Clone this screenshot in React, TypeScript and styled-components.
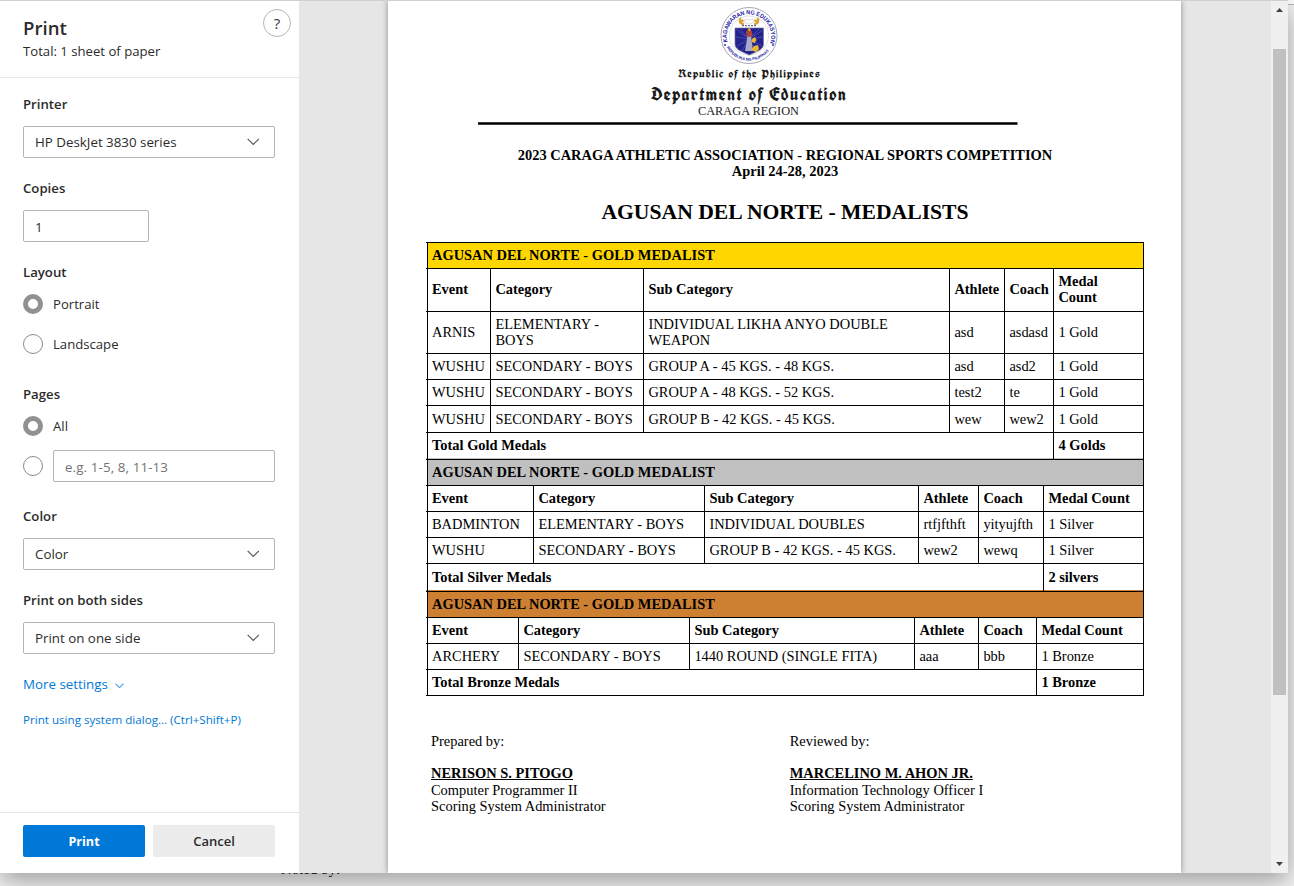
import React from "react";
import styled, { createGlobalStyle } from "styled-components";

const Global = createGlobalStyle`
  * { box-sizing: border-box; }
  body { margin: 0; background: #fff; overflow: hidden; }
`;

const UI = `"Open Sans", "Noto Sans", sans-serif`;
const SERIF = `"Liberation Serif", "Times New Roman", serif`;

const Backdrop = styled.div`
  position: relative;
  width: 1294px;
  height: 886px;
  overflow: hidden;
  background: linear-gradient(#fff 4px, #b8b8b8 4px, #b8b8b8 5px, #f4f4f4 5px);
`;

const Behind = styled.div`
  position: absolute;
  left: 281px;
  top: 861px;
  font: 14.5px/17px ${SERIF};
  letter-spacing: 0.2px;
  color: #000;
`;

const Dialog = styled.div`
  position: relative;
  display: flex;
  width: 1288px;
  height: 873px;
  border-top: 1px solid #d0d0d0;
  background: #fff;
  box-shadow: 0 8px 24px rgba(0, 0, 0, 0.36);
`;

const Sidebar = styled.aside`
  display: flex;
  flex-direction: column;
  width: 299px;
  font-family: ${UI};
  font-size: 13.33px;
  color: #2b2b2b;
`;

const Header = styled.header`
  display: flex;
  justify-content: space-between;
  height: 77px;
  padding: 8px 8px 0 23px;
  border-bottom: 1px solid #e6e6e6;
`;

const Title = styled.h1`
  margin: 6px 0 1px;
  font-size: 18.6px;
  line-height: 25px;
  font-weight: 600;
`;

const Total = styled.div`
  font-size: 13.15px;
  line-height: 20px;
`;

const Help = styled.button`
  width: 28px;
  height: 28px;
  padding: 0;
  border: 1px solid #b5b5b5;
  border-radius: 50%;
  background: #fff;
  color: #333;
  font: 15px/24px ${UI};
`;

const Settings = styled.div`
  flex: 1;
  padding: 16px 24px 0 23px;
`;

const Label = styled.div`
  height: 20px;
  margin-bottom: 12px;
  line-height: 20px;
  font-weight: 600;
  font-size: 13.2px;
`;

const Field = styled.div`
  margin-bottom: 20px;
`;

const Box = styled.div<{ $w: number; $entry?: boolean; $hint?: boolean }>`
  display: flex;
  align-items: center;
  justify-content: space-between;
  width: ${(p) => p.$w}px;
  height: 32px;
  padding: ${(p) => (p.$entry ? 2 : 0)}px 15px 0 11px;
  border: 1px solid #b4b4b4;
  border-radius: 2px;
  font-size: 13.33px;
  color: ${(p) => (p.$hint ? "#737373" : "#2b2b2b")};
  letter-spacing: ${(p) => (p.$hint ? 0.12 : 0)}px;
`;

const RadioRow = styled.div`
  display: flex;
  align-items: center;
  gap: 10px;
  height: 32px;
  margin-bottom: 8px;
  font-size: 13.15px;
`;

const Radio = styled.span<{ $on?: boolean }>`
  width: 20px;
  height: 20px;
  border: ${(p) => (p.$on ? "5px solid #919191" : "1px solid #8a8a8a")};
  border-radius: 50%;
`;

const RadioGroup = styled.div`
  height: 72px;
  margin: -6px 0 24px;
`;

const Link = styled.a<{ $small?: boolean }>`
  display: flex;
  align-items: center;
  gap: 7px;
  height: 20px;
  margin-bottom: 15px;
  font-size: ${(p) => (p.$small ? 11.62 : 13.33)}px;
  color: #0078d4;
  white-space: nowrap;
  svg { margin-top: 3px; }
`;

const Actions = styled.footer`
  display: flex;
  gap: 8px;
  height: 61px;
  padding: 12px 24px 0 23px;
  border-top: 1px solid #e6e6e6;
`;

const Button = styled.button<{ $primary?: boolean }>`
  flex: 1;
  height: 32px;
  border: 0;
  border-radius: 2px;
  background: ${(p) => (p.$primary ? "#0078d7" : "#ececec")};
  color: ${(p) => (p.$primary ? "#fff" : "#2b2b2b")};
  font: ${(p) => (p.$primary ? "700 12.6px" : "600 13px")} ${UI};
`;

const Preview = styled.main`
  display: flex;
  justify-content: center;
  width: 972px;
  padding-left: 89px;
  padding-right: 90px;
  background: #e6e6e6;
  overflow: hidden;
`;

const Paper = styled.article`
  width: 793px;
  height: 872px;
  padding-left: 38px;
  background: #fff;
  box-shadow: 0 0 6px rgba(0, 0, 0, 0.4);
  font-family: ${SERIF};
  font-size: 14.43px;
  color: #000;
`;

const Letterhead = styled.svg`
  display: block;
  width: 717px;
  height: 146px;
`;

const Heading = styled.div`
  width: 718px;
  text-align: center;
  font-weight: 700;
  font-size: 14.45px;
  line-height: 16px;
  white-space: nowrap;
`;

const DocTitle = styled(Heading)`
  margin: 21px 0 17px;
  font-size: 21.65px;
  line-height: 25px;
`;

const Table = styled.div`
  width: 718px;
  padding-left: 1px;
  border-top: 1px solid #000;
`;

const Row = styled.div<{ $cols: string; $h: number; $bold?: boolean; $fill?: string; $under?: string }>`
  display: grid;
  grid-template-columns: ${(p) => p.$cols};
  height: ${(p) => p.$h}px;
  margin-left: -1px;
  padding-left: 1px;
  border-bottom: 1px solid #000;
  background: ${(p) => p.$fill ?? "#fff"} content-box;
  box-shadow: ${(p) => (p.$under ? `inset 0 -1px ${p.$under}` : "none")};
  font-weight: ${(p) => (p.$bold ? 700 : 400)};
`;

const Cell = styled.div<{ $span?: number; $low?: boolean }>`
  display: flex;
  align-items: center;
  grid-column: span ${(p) => p.$span ?? 1};
  padding: 0 0 ${(p) => (p.$low ? 0 : 2)}px 4.4px;
  border-right: 1px solid #000;
  line-height: 16px;
  white-space: pre;
  &:first-child { padding-left: 4px; border-left: 1px solid #000; }
`;

const Signatures = styled.div`
  display: grid;
  grid-template-columns: 358.7px 350px;
  padding: 37px 0 0 5px;
  line-height: 16px;
`;

const Signer = styled.div`
  margin-top: 16px;
  line-height: 17px;
  font-weight: 700;
  text-decoration: underline;
`;

const Scrollbar = styled.div`
  display: flex;
  flex-direction: column;
  align-items: center;
  width: 17px;
  background: #f0f0f0;
`;

const Thumb = styled.div`
  width: 13px;
  height: 646px;
  margin: 30px 0 160px;
  background: #c0c0c0;
`;

const Chevron = ({ size = 12.5, color = "#555" }: { size?: number; color?: string }) => (
  <svg width={size} height={size * 0.62} viewBox="0 0 13 8" fill="none" stroke={color} strokeWidth={size > 10 ? 1.2 : 1.5}>
    <path d="M.7 .9 6.500 6.700 12.300 .9" />
  </svg>
);

const Arrow = ({ down }: { down?: boolean }) => (
  <svg width="17" height="18" viewBox="0 0 17 18" fill="#404040">
    <path d={down ? "M5 7h7L8.500 11z" : "M5 11h7L8.500 7z"} />
  </svg>
);

const Seal = () => (
  <g>
    <circle cx="323" cy="34.500" r="28" fill="#fff" stroke="#a5a5b5" strokeWidth="1" />
    <circle cx="323" cy="34.500" r="19.500" fill="#fff" stroke="#ccccd4" strokeWidth=".6" />
    <path id="ringTop" d="M301.500 41a22.200 22.200 0 1 1 43 0" fill="none" />
    <path id="ringBottom" d="M299.500 43.500a25.200 25.200 0 0 0 47 0" fill="none" />
    <g fill="#2222a8" fontFamily="Liberation Sans, sans-serif" fontWeight="700">
      <text fontSize="6"><textPath href="#ringTop" textLength="82" lengthAdjust="spacingAndGlyphs">KAGAWARAN NG EDUKASYON</textPath></text>
      <text fontSize="4"><textPath href="#ringBottom" startOffset="3" textLength="50" lengthAdjust="spacingAndGlyphs">REPUBLIKA NG PILIPINAS</textPath></text>
      <circle cx="299" cy="44" r=".9" />
      <circle cx="347" cy="44" r=".9" />
    </g>
    <path d="M309 27h28.500v16c0 5-5 7-14.200 11-9.300-4-14.300-6-14.300-11z" fill="#23238e" stroke="#777799" strokeWidth=".7" />
    <g stroke="#6a6ac8" strokeWidth=".5">
      <path d="M323 38 310 28M323 38 314 28M323 38 333 28M323 38 337 29M323 38 310 36M323 38 337 36M323 38 311 45M323 38 336 45M323 38 316 50M323 38 330 50" />
    </g>
    <path d="M319 50l2.500-15h3.500l2 15z" fill="#a9a9cc" />
    <path d="M320.500 35l-.5-4 2-3 1.500-1 2.500 4 .5 4-3 1z" fill="#b04437" />
    <path d="M322 29l1-2.500 1.500 2-.5 2zM326 38l3-2 1.500 3-2 3-3-1zM328 45l4-1 1 4-3 3-5-2z" fill="#ebb730" />
    <path d="M319 18l4 1 4-1v4l-4 1-4-1z" fill="#fff" stroke="#bbb" strokeWidth=".5" />
    <g fill="none" stroke="#d7a33b" strokeWidth="2.200">
      <path d="M315 17c-2.500 2-1 6 3 6M331 17c2.500 2 1 6-3 6" />
      <path d="M313.500 22l4-3M332.500 22l-4-3" />
    </g>
    <path d="M316 24.700h14" stroke="#3c3c84" strokeWidth="1" strokeDasharray="2 1" />
  </g>
);

const GOLD = "64px 153px 306px 55px 49px 90px";
const SILVER = "107px 171px 214px 60px 65px 100px";
const BRONZE = "92px 171px 225px 64px 58px 107px";
const HEAD = ["Event", "Category", "Sub Category", "Athlete", "Coach", "Medal Count"];

type Group = { cols: string; fill: string; under?: string; heads: string[]; rows: string[][]; heights: number[]; total: string; count: string };

const groups: Group[] = [
  {
    cols: GOLD, fill: "#ffd700", under: "#c0c0c0", total: "Total Gold Medals", count: "4 Golds",
    heads: [...HEAD.slice(0, 5), "Medal\nCount"],
    heights: [43, 42, 26, 26, 27, 27],
    rows: [
      ["ARNIS", "ELEMENTARY -\nBOYS", "INDIVIDUAL LIKHA ANYO DOUBLE\nWEAPON", "asd", "asdasd", "1 Gold"],
      ["WUSHU", "SECONDARY - BOYS", "GROUP A - 45 KGS. - 48 KGS.", "asd", "asd2", "1 Gold"],
      ["WUSHU", "SECONDARY - BOYS", "GROUP A - 48 KGS. - 52 KGS.", "test2", "te", "1 Gold"],
      ["WUSHU", "SECONDARY - BOYS", "GROUP B - 42 KGS. - 45 KGS.", "wew", "wew2", "1 Gold"],
    ],
  },
  {
    cols: SILVER, fill: "#c0c0c0", under: "#cd7f32", total: "Total Silver Medals", count: "2 silvers",
    heads: HEAD,
    heights: [26, 26, 26, 28],
    rows: [
      ["BADMINTON", "ELEMENTARY - BOYS", "INDIVIDUAL DOUBLES", "rtfjfthft", "yityujfth", "1 Silver"],
      ["WUSHU", "SECONDARY - BOYS", "GROUP B - 42 KGS. - 45 KGS.", "wew2", "wewq", "1 Silver"],
    ],
  },
  {
    cols: BRONZE, fill: "#cd7f32", total: "Total Bronze Medals", count: "1 Bronze",
    heads: HEAD,
    heights: [26, 26, 26],
    rows: [["ARCHERY", "SECONDARY - BOYS", "1440 ROUND (SINGLE FITA)", "aaa", "bbb", "1 Bronze"]],
  },
];

const MedalGroup = ({ g }: { g: Group }) => (
  <>
    <Row $cols={g.cols} $h={26} $fill={g.fill} $bold><Cell $span={6}>AGUSAN DEL NORTE - GOLD MEDALIST</Cell></Row>
    <Row $cols={g.cols} $h={g.heights[0]} $bold>{g.heads.map((h) => <Cell key={h}>{h}</Cell>)}</Row>
    {g.rows.map((r, i) => (
      <Row key={i} $cols={g.cols} $h={g.heights[i + 1]}>
        {r.map((c, j) => <Cell key={j} $low={g.heights[i + 1] === 27}>{c}</Cell>)}
      </Row>
    ))}
    <Row $cols={g.cols} $h={g.heights[g.heights.length - 1]} $under={g.under} $bold>
      <Cell $span={5}>{g.total}</Cell>
      <Cell>{g.count}</Cell>
    </Row>
  </>
);

const Select = ({ label, value }: { label: string; value: string }) => (
  <Field>
    <Label>{label}</Label>
    <Box $w={252}>{value}<Chevron /></Box>
  </Field>
);

export default function App() {
  return (
    <Backdrop>
      <Global />
      <Behind>Noted by:</Behind>
      <Dialog>
        <Sidebar>
          <Header>
            <div>
              <Title>Print</Title>
              <Total>Total: 1 sheet of paper</Total>
            </div>
            <Help>?</Help>
          </Header>
          <Settings>
            <Select label="Printer" value="HP DeskJet 3830 series" />
            <Field>
              <Label>Copies</Label>
              <Box $w={126} $entry>1</Box>
            </Field>
            <Label>Layout</Label>
            <RadioGroup>
              <RadioRow><Radio $on />Portrait</RadioRow>
              <RadioRow><Radio />Landscape</RadioRow>
            </RadioGroup>
            <Label>Pages</Label>
            <RadioGroup>
              <RadioRow><Radio $on />All</RadioRow>
              <RadioRow><Radio /><Box $w={222} $entry $hint>e.g. 1-5, 8, 11-13</Box></RadioRow>
            </RadioGroup>
            <Select label="Color" value="Color" />
            <Select label="Print on both sides" value="Print on one side" />
            <Link>More settings <Chevron size={9} color="#4a9fe0" /></Link>
            <Link $small>Print using system dialog... (Ctrl+Shift+P)</Link>
          </Settings>
          <Actions>
            <Button $primary>Print</Button>
            <Button>Cancel</Button>
          </Actions>
        </Sidebar>
        <Preview>
          <Paper>
            <Letterhead viewBox="0 0 717 146">
              <Seal />
              <g fontFamily="'Old English Text MT', UnifrakturCook, 'Liberation Serif', serif" fill="#1a1a1a" fontWeight="700">
                <text x="252" y="77" fontSize="12" textLength="142" lengthAdjust="spacing">Republic of the Philippines</text>
                <text x="225" y="100" fontSize="18" textLength="195" lengthAdjust="spacing">Department of Education</text>
              </g>
              <text x="272" y="114" fontFamily="Liberation Serif, serif" fontSize="12" fill="#222" textLength="101" lengthAdjust="spacingAndGlyphs">CARAGA REGION</text>
              <path d="M52 122.500H591.500" stroke="#000" strokeWidth="2.400" />
            </Letterhead>
            <Heading>2023 CARAGA ATHLETIC ASSOCIATION - REGIONAL SPORTS COMPETITION</Heading>
            <Heading>April 24-28, 2023</Heading>
            <DocTitle>AGUSAN DEL NORTE - MEDALISTS</DocTitle>
            <Table>{groups.map((g) => <MedalGroup key={g.total} g={g} />)}</Table>
            <Signatures>
              <div>
                Prepared by:
                <Signer>NERISON S. PITOGO</Signer>
                Computer Programmer II<br />Scoring System Administrator
              </div>
              <div>
                Reviewed by:
                <Signer>MARCELINO M. AHON JR.</Signer>
                Information Technology Officer I<br />Scoring System Administrator
              </div>
            </Signatures>
          </Paper>
        </Preview>
        <Scrollbar>
          <Arrow />
          <Thumb />
          <Arrow down />
        </Scrollbar>
      </Dialog>
    </Backdrop>
  );
}
